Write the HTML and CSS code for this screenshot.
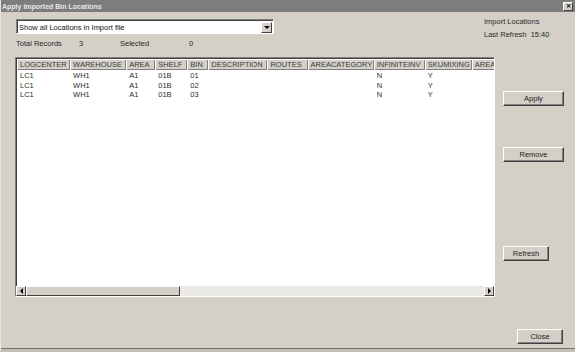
FILE: index.html
```html
<!DOCTYPE html>
<html>
<head>
<link rel="stylesheet" href="styles.css">
</head>
<body>
  <div id="window">
    <div id="titlebar">
      <span class="title">Apply Imported Bin Locations</span>
      <span class="xbtn">&#x2715;</span>
    </div>

    <div id="top">
      <div class="filters">
        <div class="combo">
          <span class="combo_text">Show all Locations in Import file</span>
          <span class="combo_btn"><i class="down"></i></span>
        </div>
        <div class="counts">
          <span class="c_label">Total Records</span>
          <span class="c_value">3</span>
          <span class="c_label2">Selected</span>
          <span>0</span>
        </div>
      </div>
      <div class="info">
        <div>Import Locations</div>
        <div>Last Refresh&nbsp; 15:40</div>
      </div>
    </div>

    <div id="middle">
      <div id="grid">
        <div class="grid_view">
          <table>
            <colgroup>
              <col style="width:53px"><col style="width:56px"><col style="width:29px"><col style="width:32px">
              <col style="width:21px"><col style="width:59px"><col style="width:40px"><col style="width:66px">
              <col style="width:51px"><col style="width:47px"><col style="width:50px">
            </colgroup>
            <thead>
              <tr>
                <th>LOGCENTER</th><th>WAREHOUSE</th><th>AREA</th><th>SHELF</th><th>BIN</th><th>DESCRIPTION</th>
                <th>ROUTES</th><th>AREACATEGORY</th><th>INFINITEINV</th><th>SKUMIXING</th><th>AREA</th>
              </tr>
            </thead>
            <tbody>
              <tr><td>LC1</td><td>WH1</td><td>A1</td><td>01B</td><td>01</td><td></td><td></td><td></td><td>N</td><td>Y</td><td></td></tr>
              <tr><td>LC1</td><td>WH1</td><td>A1</td><td>01B</td><td>02</td><td></td><td></td><td></td><td>N</td><td>Y</td><td></td></tr>
              <tr><td>LC1</td><td>WH1</td><td>A1</td><td>01B</td><td>03</td><td></td><td></td><td></td><td>N</td><td>Y</td><td></td></tr>
            </tbody>
          </table>
        </div>
        <div class="hscroll">
          <span class="sbtn"><i class="left"></i></span>
          <span class="thumb"></span>
          <span class="track"></span>
          <span class="sbtn"><i class="right"></i></span>
        </div>
      </div>
      <div id="side">
        <div class="btn wide b_apply">Apply</div>
        <div class="btn wide b_remove">Remove</div>
        <div class="btn b_refresh">Refresh</div>
      </div>
    </div>

    <div id="footer">
      <div class="btn b_close">Close</div>
    </div>
  </div>
</body>
</html>
```

FILE: styles.css
```css
html, body {
  margin: 0;
  padding: 0;
  background-color: #d4d0c8;
  font-family: "Liberation Sans", Arial, sans-serif;
  font-size: 7.5px;
  color: #2a2a2a;
}

#window {
  width: 575px;
  height: 352px;
  box-sizing: border-box;
  background-color: #d4d0c8;
  border-left: 1px solid #e8e6e0;
  border-bottom: 3px solid #c4c0b8;
  box-shadow: inset 0 -1px 0 #6f6f6f;
  display: flex;
  flex-direction: column;
  overflow: hidden;
}

#titlebar {
  height: 12px;
  background-color: #7d7d7d;
  display: flex;
  align-items: center;
  justify-content: space-between;
  padding: 0 2px 0 1px;
}
#titlebar .title {
  color: #e8e8e8;
  font-weight: bold;
  font-size: 7px;
}
#titlebar .xbtn {
  width: 10px;
  height: 9px;
  box-sizing: border-box;
  background-color: #d4d0c8;
  border: 1px solid;
  border-color: #fff #404040 #404040 #fff;
  font-size: 6px;
  font-weight: bold;
  line-height: 7px;
  text-align: center;
  color: #000;
}

#top {
  height: 45px;
  display: flex;
  justify-content: space-between;
}
.filters {
  padding: 7px 0 0 15px;
}
.combo {
  width: 258px;
  height: 15px;
  box-sizing: border-box;
  background-color: white;
  border: 1px solid;
  border-color: #808080 #fff #fff #808080;
  box-shadow: inset 1px 1px 0 #404040;
  display: flex;
  align-items: center;
  justify-content: space-between;
  padding: 1px 1px 0 2px;
}
.combo_text {
  color: #111;
}
.combo_btn {
  width: 11px;
  height: 11px;
  box-sizing: border-box;
  background-color: #d4d0c8;
  border: 1px solid;
  border-color: #fff #404040 #404040 #fff;
  display: flex;
  align-items: center;
  justify-content: center;
}
.down {
  width: 0;
  height: 0;
  border-left: 3px solid transparent;
  border-right: 3px solid transparent;
  border-top: 3px solid #000;
}
.counts {
  margin-top: 6px;
  line-height: 8px;
  display: flex;
}
.c_label { width: 63px; }
.c_value { width: 41px; }
.c_label2 { width: 69px; }

.info {
  width: 91px;
  padding-top: 3px;
  line-height: 13px;
}

#middle {
  height: 240px;
  display: flex;
}
#grid {
  margin-left: 14px;
  width: 480px;
  box-sizing: border-box;
  background-color: white;
  border: 1px solid;
  border-color: #808080 #fff #fff #808080;
  display: flex;
  flex-direction: column;
}
.grid_view {
  flex: 1;
  overflow: hidden;
  box-shadow: inset 1px 1px 0 #404040;
  padding: 1px 0 0 1px;
}
table {
  width: 505px;
  table-layout: fixed;
  border-collapse: separate;
  border-spacing: 0;
}
th {
  height: 11px;
  box-sizing: border-box;
  padding: 0 0 0 3px;
  background-color: #d4d0c8;
  box-shadow: inset 1px 1px 0 #fff, inset -1px -1px 0 #808080;
  font-weight: normal;
  text-align: left;
  color: #3a3a3a;
  white-space: nowrap;
  overflow: hidden;
}
td {
  height: 9.5px;
  padding: 0 0 0 3px;
  line-height: 9.5px;
  white-space: nowrap;
}
tbody tr:first-child td {
  padding-top: 1px;
}

.hscroll {
  height: 10px;
  display: flex;
  background-color: #ebe9e4;
}
.sbtn {
  width: 10px;
  box-sizing: border-box;
  background-color: #d4d0c8;
  border: 1px solid;
  border-color: #fff #404040 #404040 #fff;
  display: flex;
  align-items: center;
  justify-content: center;
}
.thumb {
  width: 154px;
  box-sizing: border-box;
  background-color: #d4d0c8;
  border: 1px solid;
  border-color: #fff #404040 #404040 #fff;
}
.track {
  flex: 1;
}
.left {
  width: 0;
  height: 0;
  border-top: 3px solid transparent;
  border-bottom: 3px solid transparent;
  border-right: 3px solid #000;
}
.right {
  width: 0;
  height: 0;
  border-top: 3px solid transparent;
  border-bottom: 3px solid transparent;
  border-left: 3px solid #000;
}

#side {
  margin-left: 8px;
  display: flex;
  flex-direction: column;
  align-items: flex-start;
}
.btn {
  height: 15px;
  box-sizing: border-box;
  background-color: #d4d0c8;
  border: 1px solid;
  border-color: #fff #404040 #404040 #fff;
  box-shadow: inset -1px -1px 0 #808080;
  display: flex;
  align-items: center;
  justify-content: center;
  color: #222;
  padding-bottom: 1px;
}
.wide { width: 61px; }
.b_apply { margin-top: 34px; }
.b_remove { margin-top: 41px; }
.b_refresh { margin-top: 84px; width: 46px; }

#footer {
  display: flex;
  justify-content: flex-end;
  padding: 32px 12px 0 0;
}
.b_close { width: 46px; }
```
